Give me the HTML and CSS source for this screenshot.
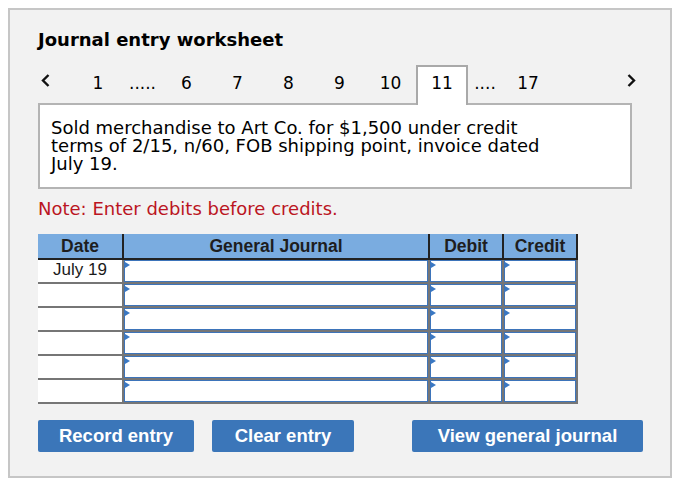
FILE: index.html
```html
<!DOCTYPE html>
<html lang="en">
<head>
<meta charset="utf-8">
<title>Journal entry worksheet</title>
<link rel="stylesheet" href="styles.css">
</head>
<body>
<div class="worksheet">
  <h2 class="ws-title">Journal entry worksheet</h2>

  <nav class="steps">
    <span class="step-arrow step-prev">
      <svg width="9" height="13" viewBox="0 0 9 13"><polyline points="7.5,1 2,6.5 7.5,12" fill="none" stroke="#111" stroke-width="2.4"/></svg>
    </span>
    <span class="step step-first">1</span>
    <span class="step-gap step-gap-wide">.....</span>
    <span class="step">6</span>
    <span class="step">7</span>
    <span class="step">8</span>
    <span class="step">9</span>
    <span class="step">10</span>
    <span class="step step-active">11</span>
    <span class="step-gap">....</span>
    <span class="step step-last">17</span>
    <span class="step-arrow step-next">
      <svg width="9" height="13" viewBox="0 0 9 13"><polyline points="1.5,1 7,6.5 1.5,12" fill="none" stroke="#111" stroke-width="2.4"/></svg>
    </span>
  </nav>

  <div class="prompt">
    <p class="prompt-text">Sold merchandise to Art Co. for $1,500 under credit terms of 2/15, n/60, FOB shipping point, invoice dated July 19.</p>
  </div>

  <p class="note">Note: Enter debits before credits.</p>

  <div class="journal">
    <div class="journal-head">
      <div class="head-cell">Date</div>
      <div class="head-cell">General Journal</div>
      <div class="head-cell">Debit</div>
      <div class="head-cell">Credit</div>
    </div>
    <div class="journal-body">
      <div class="date-cell">July 19</div>
      <div class="entry"><input class="entry-input" type="text"></div>
      <div class="entry"><input class="entry-input" type="text"></div>
      <div class="entry"><input class="entry-input" type="text"></div>

      <div class="date-cell"></div>
      <div class="entry"><input class="entry-input" type="text"></div>
      <div class="entry"><input class="entry-input" type="text"></div>
      <div class="entry"><input class="entry-input" type="text"></div>

      <div class="date-cell"></div>
      <div class="entry"><input class="entry-input" type="text"></div>
      <div class="entry"><input class="entry-input" type="text"></div>
      <div class="entry"><input class="entry-input" type="text"></div>

      <div class="date-cell"></div>
      <div class="entry"><input class="entry-input" type="text"></div>
      <div class="entry"><input class="entry-input" type="text"></div>
      <div class="entry"><input class="entry-input" type="text"></div>

      <div class="date-cell"></div>
      <div class="entry"><input class="entry-input" type="text"></div>
      <div class="entry"><input class="entry-input" type="text"></div>
      <div class="entry"><input class="entry-input" type="text"></div>

      <div class="date-cell"></div>
      <div class="entry"><input class="entry-input" type="text"></div>
      <div class="entry"><input class="entry-input" type="text"></div>
      <div class="entry"><input class="entry-input" type="text"></div>
    </div>
  </div>

  <div class="actions">
    <button class="btn btn-record" type="button">Record entry</button>
    <button class="btn btn-clear" type="button">Clear entry</button>
    <button class="btn btn-view" type="button">View general journal</button>
  </div>
</div>
</body>
</html>
```

FILE: styles.css
```css
html, body {
  margin: 0;
  padding: 0;
  background: #ffffff;
}

body {
  padding: 8px;
  font-family: "DejaVu Sans", Verdana, sans-serif;
  color: #000;
}

.worksheet {
  width: 664px;
  box-sizing: border-box;
  border: 2px solid #c6c6c6;
  background: #f2f2f2;
  padding: 19px 38px 24px 28px;
}

.ws-title {
  margin: 0;
  font-size: 18px;
  font-weight: 700;
  line-height: 22px;
}

/* step navigation */
.steps {
  display: flex;
  align-items: flex-start;
  height: 40px;
  margin-top: 14px;
  margin-right: -6px;
  font-size: 17px;
  line-height: 20px;
}

.step,
.step-gap {
  box-sizing: border-box;
  height: 40px;
  padding-top: 8px;
  text-align: center;
}

.step {
  width: 51px;
}

.step-first {
  width: 52px;
}

.step-last {
  width: 52px;
}

.step-gap {
  width: 34px;
}

.step-gap-wide {
  width: 37px;
}

.step-active {
  position: relative;
  z-index: 1;
  width: 52px;
  border: 2px solid #a9a9a9;
  border-bottom: none;
  background: #fff;
  padding-top: 6px;
}

.step-arrow {
  display: flex;
  height: 40px;
  padding-top: 9px;
  box-sizing: border-box;
}

.step-prev {
  width: 34px;
  padding-left: 3px;
}

.step-next {
  margin-left: auto;
  width: 11px;
}

/* transaction description */
.prompt {
  margin-top: -2px;
  border: 2px solid #b4b4b4;
  background: #fff;
  padding: 14px 12px 14px 11px;
}

.prompt-text {
  margin: 0;
  max-width: 510px;
  font-size: 18px;
  line-height: 18px;
}

.note {
  margin: 11px 0 0;
  font-size: 18px;
  line-height: 18px;
  color: #bb1522;
}

/* journal grid */
.journal {
  width: 540px;
  margin-top: 16px;
  font-family: "Liberation Sans", Arial, sans-serif;
}

.journal-head,
.journal-body {
  display: grid;
  grid-template-columns: 84px 304px 72px 72px;
  column-gap: 2px;
  padding: 0 2px 2px 0;
}

.journal-head {
  background: #222;
}

.head-cell {
  background: #7aace0;
  color: #1e1e1e;
  font-weight: 700;
  font-size: 17.5px;
  line-height: 24px;
  text-align: center;
}

.journal-body {
  row-gap: 2px;
  background: #767676;
}

.date-cell {
  height: 22px;
  background: #fff;
  font-size: 17px;
  line-height: 20px;
  text-align: center;
  color: #1a1a1a;
}

.entry {
  position: relative;
  height: 22px;
}

.entry::before {
  content: "";
  position: absolute;
  left: 1px;
  top: 2px;
  border-left: 5px solid #3a78c3;
  border-top: 3px solid transparent;
  border-bottom: 3px solid transparent;
}

.entry-input {
  display: block;
  box-sizing: border-box;
  width: 100%;
  height: 22px;
  margin: 0;
  padding: 0 4px;
  border: 1px solid #3d74ba;
  border-radius: 0;
  background: #fff;
  font: inherit;
  outline: none;
}

/* buttons */
.actions {
  display: flex;
  gap: 18px;
  margin-top: 16px;
}

.btn {
  flex: none;
  height: 32px;
  border: none;
  border-radius: 2px;
  background: #3b76b9;
  color: #fff;
  font-family: "Liberation Sans", Arial, sans-serif;
  font-weight: 700;
  font-size: 18.5px;
  padding: 0;
  cursor: pointer;
}

.btn-record {
  width: 156px;
}

.btn-clear {
  width: 142px;
}

.btn-view {
  width: 231px;
  margin-left: 40px;
}
```
